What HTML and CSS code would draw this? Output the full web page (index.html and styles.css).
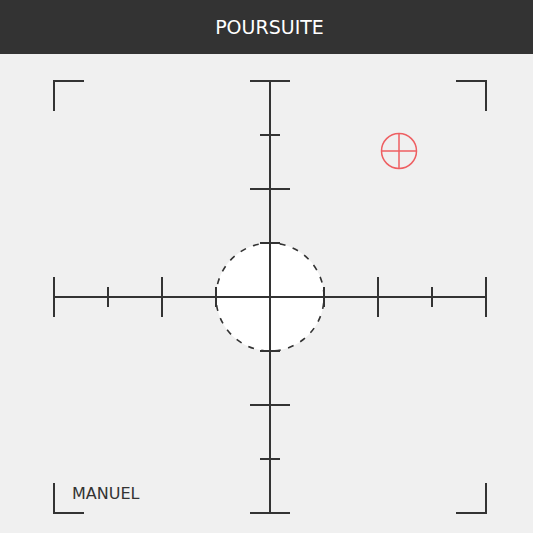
FILE: index.html
```html
<!DOCTYPE html>
<html lang="fr">
<head>
<meta charset="utf-8">
<title>Poursuite</title>
<link rel="stylesheet" href="styles.css">
</head>
<body>
<div class="app">
  <header class="topbar">POURSUITE</header>
  <main class="scope">
    <svg class="scope-svg" width="533" height="479" viewBox="0 0 533 479">
      <g class="corners">
        <path d="M54 57 V27 H84"/>
        <path d="M456 27 H486 V57"/>
        <path d="M54 429 V459 H84"/>
        <path d="M456 459 H486 V429"/>
      </g>
      <circle class="zone" cx="270" cy="243" r="54"/>
      <g class="axes">
        <path d="M54 243 H486"/>
        <path d="M270 27 V459"/>
        <path d="M54 223 V263 M162 223 V263 M378 223 V263 M486 223 V263"/>
        <path d="M108 233 V253 M216 233 V253 M324 233 V253 M432 233 V253"/>
        <path d="M250 27 H290 M250 135 H290 M250 351 H290 M250 459 H290"/>
        <path d="M260 81 H280 M260 189 H280 M260 297 H280 M260 405 H280"/>
      </g>
      <g class="target">
        <circle cx="399" cy="97" r="17.5"/>
        <path d="M381.5 97 H416.5 M399 79.5 V114.5"/>
      </g>
      <text class="mode" x="72" y="445">MANUEL</text>
    </svg>
  </main>
</div>
</body>
</html>
```
FILE: styles.css
```css
html, body {
  margin: 0;
  padding: 0;
  background: #f0f0f0;
}
.app {
  width: 533px;
  height: 533px;
  display: flex;
  flex-direction: column;
  font-family: "DejaVu Sans", sans-serif;
}
.topbar {
  height: 54px;
  background: #333333;
  color: #ffffff;
  font-size: 19px;
  display: flex;
  align-items: center;
  justify-content: center;
  padding-left: 6px;
}
.scope {
  flex: 1;
  background: #f0f0f0;
}
.scope-svg {
  display: block;
}
.corners path,
.axes path {
  fill: none;
  stroke: #333333;
  stroke-width: 2;
}
.zone {
  fill: #ffffff;
  stroke: #333333;
  stroke-width: 1.6;
  stroke-dasharray: 6 7.57;
  stroke-dashoffset: -6;
}
.target circle,
.target path {
  fill: none;
  stroke: #ee5f62;
  stroke-width: 1.5;
}
.mode {
  font-family: "DejaVu Sans", sans-serif;
  font-size: 16px;
  fill: #333333;
}
```
